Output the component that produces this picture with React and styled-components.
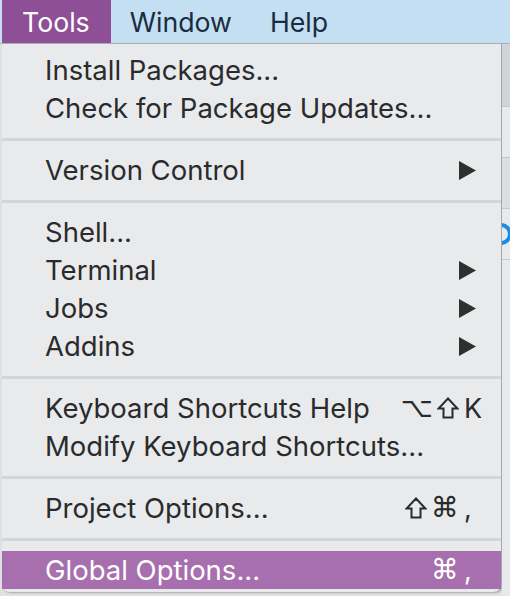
import React from "react";
import styled, { createGlobalStyle } from "styled-components";

const Global = createGlobalStyle`
  html, body { margin: 0; padding: 0; }
  body {
    width: 510px;
    height: 596px;
    overflow: hidden;
    background: #e4e6e7;
    font-family: Inter, "Noto Sans", "DejaVu Sans", sans-serif;
  }
`;

const Screen = styled.div`
  width: 510px;
  height: 596px;
  display: flex;
  flex-direction: column;
  overflow: hidden;
`;

const MenuBar = styled.div`
  height: 43px;
  flex: none;
  display: flex;
  align-items: stretch;
  padding-left: 2px;
  background: #c4dff1;
  border-bottom: 1px solid #a9b3bb;
`;

const BarItem = styled.div`
  display: flex;
  align-items: center;
  padding: 0 ${(p) => p.$pad}px 0 ${(p) => p.$padL}px;
  font-size: 26.7px;
  color: ${(p) => (p.$active ? "#ffffff" : "#182c42")};
  background: ${(p) => (p.$active ? "#8e4f96" : "transparent")};
`;

const Body = styled.div`
  flex: 1;
  display: flex;
  background: #dfe2e3;
`;

const Menu = styled.div`
  width: 500px;
  flex: none;
  margin-left: 2px;
  height: 548px;
  box-sizing: border-box;
  padding-top: 7px;
  background: #e9eaeb;
  border-right: 1px solid #a4a6a8;
  border-bottom-left-radius: 8px;
  border-bottom-right-radius: 8px;
  box-shadow: 1px 1px 2px rgba(0, 0, 0, 0.25);
  display: flex;
  flex-direction: column;
`;

const Side = styled.div`
  flex: 1;
  min-width: 0;
  display: flex;
  flex-direction: column;
  background: #e7e9ea;
`;

const SideRow = styled.div`
  height: ${(p) => p.$h}px;
  flex: none;
  border-bottom: 1px solid #c6c8ca;
  background: ${(p) => p.$bg || "transparent"};
  display: flex;
  align-items: center;
  overflow: hidden;
`;

const BlueRing = styled.div`
  flex: none;
  width: 14px;
  height: 14px;
  border-radius: 50%;
  border: 4px solid #1a8ae4;
  margin-left: -12px;
`;

const Item = styled.div`
  height: 38px;
  flex: none;
  display: flex;
  align-items: center;
  padding: 0 25px 0 43px;
  font-size: 27.5px;
  color: ${(p) => (p.$active ? "#ffffff" : "#2a2b2c")};
  background: ${(p) => (p.$active ? "#a86fae" : "transparent")};
`;

const Label = styled.span`
  flex: 1;
  white-space: nowrap;
`;

const Separator = styled.div`
  height: 24px;
  flex: none;
  display: flex;
  align-items: center;
  &::after {
    content: "";
    display: block;
    width: 100%;
    height: 3px;
    background: #d3d5d6;
  }
`;

const Shortcut = styled.span`
  display: flex;
  align-items: center;
  gap: 4px;
  margin-right: -5px;
`;

const Glyph = styled.span`
  font-family: "DejaVu Sans", sans-serif;
  font-size: 28px;
  line-height: 1;
`;

const Key = styled.span`
  width: 17px;
  margin-left: 1px;
  font-family: Inter, sans-serif;
  font-size: 27px;
`;

const Arrow = () => (
  <svg width="17" height="19" viewBox="0 0 17 19">
    <polygon points="0,0 17,9.5 0,19" fill="#2f3131" />
  </svg>
);

const ShiftIcon = ({ color }) => (
  <svg width="22" height="22" viewBox="0 0 22 22">
    <path
      d="M11 1.5 L20.5 11.5 H15.5 V20.5 H6.5 V11.5 H1.5 Z"
      fill="none"
      stroke={color}
      strokeWidth="2"
      strokeLinejoin="miter"
    />
  </svg>
);

const Row = ({ label, sub, mods, keyChar, active }) => {
  const color = active ? "#ffffff" : "#2a2b2c";
  return (
    <Item $active={active}>
      <Label>{label}</Label>
      {sub && <Arrow />}
      {mods && (
        <Shortcut>
          {mods.map((m, i) =>
            m === "shift" ? (
              <ShiftIcon key={i} color={color} />
            ) : (
              <Glyph key={i}>{m}</Glyph>
            )
          )}
          <Key>{keyChar}</Key>
        </Shortcut>
      )}
    </Item>
  );
};

export default function App() {
  return (
    <>
      <Global />
      <Screen>
        <MenuBar>
          <BarItem $active $padL={20} $pad={21}>Tools</BarItem>
          <BarItem $padL={19} $pad={19}>Window</BarItem>
          <BarItem $padL={19} $pad={19}>Help</BarItem>
        </MenuBar>
        <Body>
          <Menu>
            <Row label="Install Packages..." />
            <Row label="Check for Package Updates..." />
            <Separator />
            <Row label="Version Control" sub />
            <Separator />
            <Row label="Shell..." />
            <Row label="Terminal" sub />
            <Row label="Jobs" sub />
            <Row label="Addins" sub />
            <Separator />
            <Row label="Keyboard Shortcuts Help" mods={["⌥", "shift"]} keyChar="K" />
            <Row label="Modify Keyboard Shortcuts..." />
            <Separator />
            <Row label="Project Options..." mods={["shift", "⌘"]} keyChar="," />
            <Separator />
            <Row label="Global Options..." mods={["⌘"]} keyChar="," active />
          </Menu>
          <Side>
            <SideRow $h={62} $bg="#d2d4d5" />
            <SideRow $h={50} />
            <SideRow $h={50} $bg="#dcdfe0" />
            <SideRow $h={50}>
              <BlueRing />
            </SideRow>
            <SideRow $h={340} />
          </Side>
        </Body>
      </Screen>
    </>
  );
}
